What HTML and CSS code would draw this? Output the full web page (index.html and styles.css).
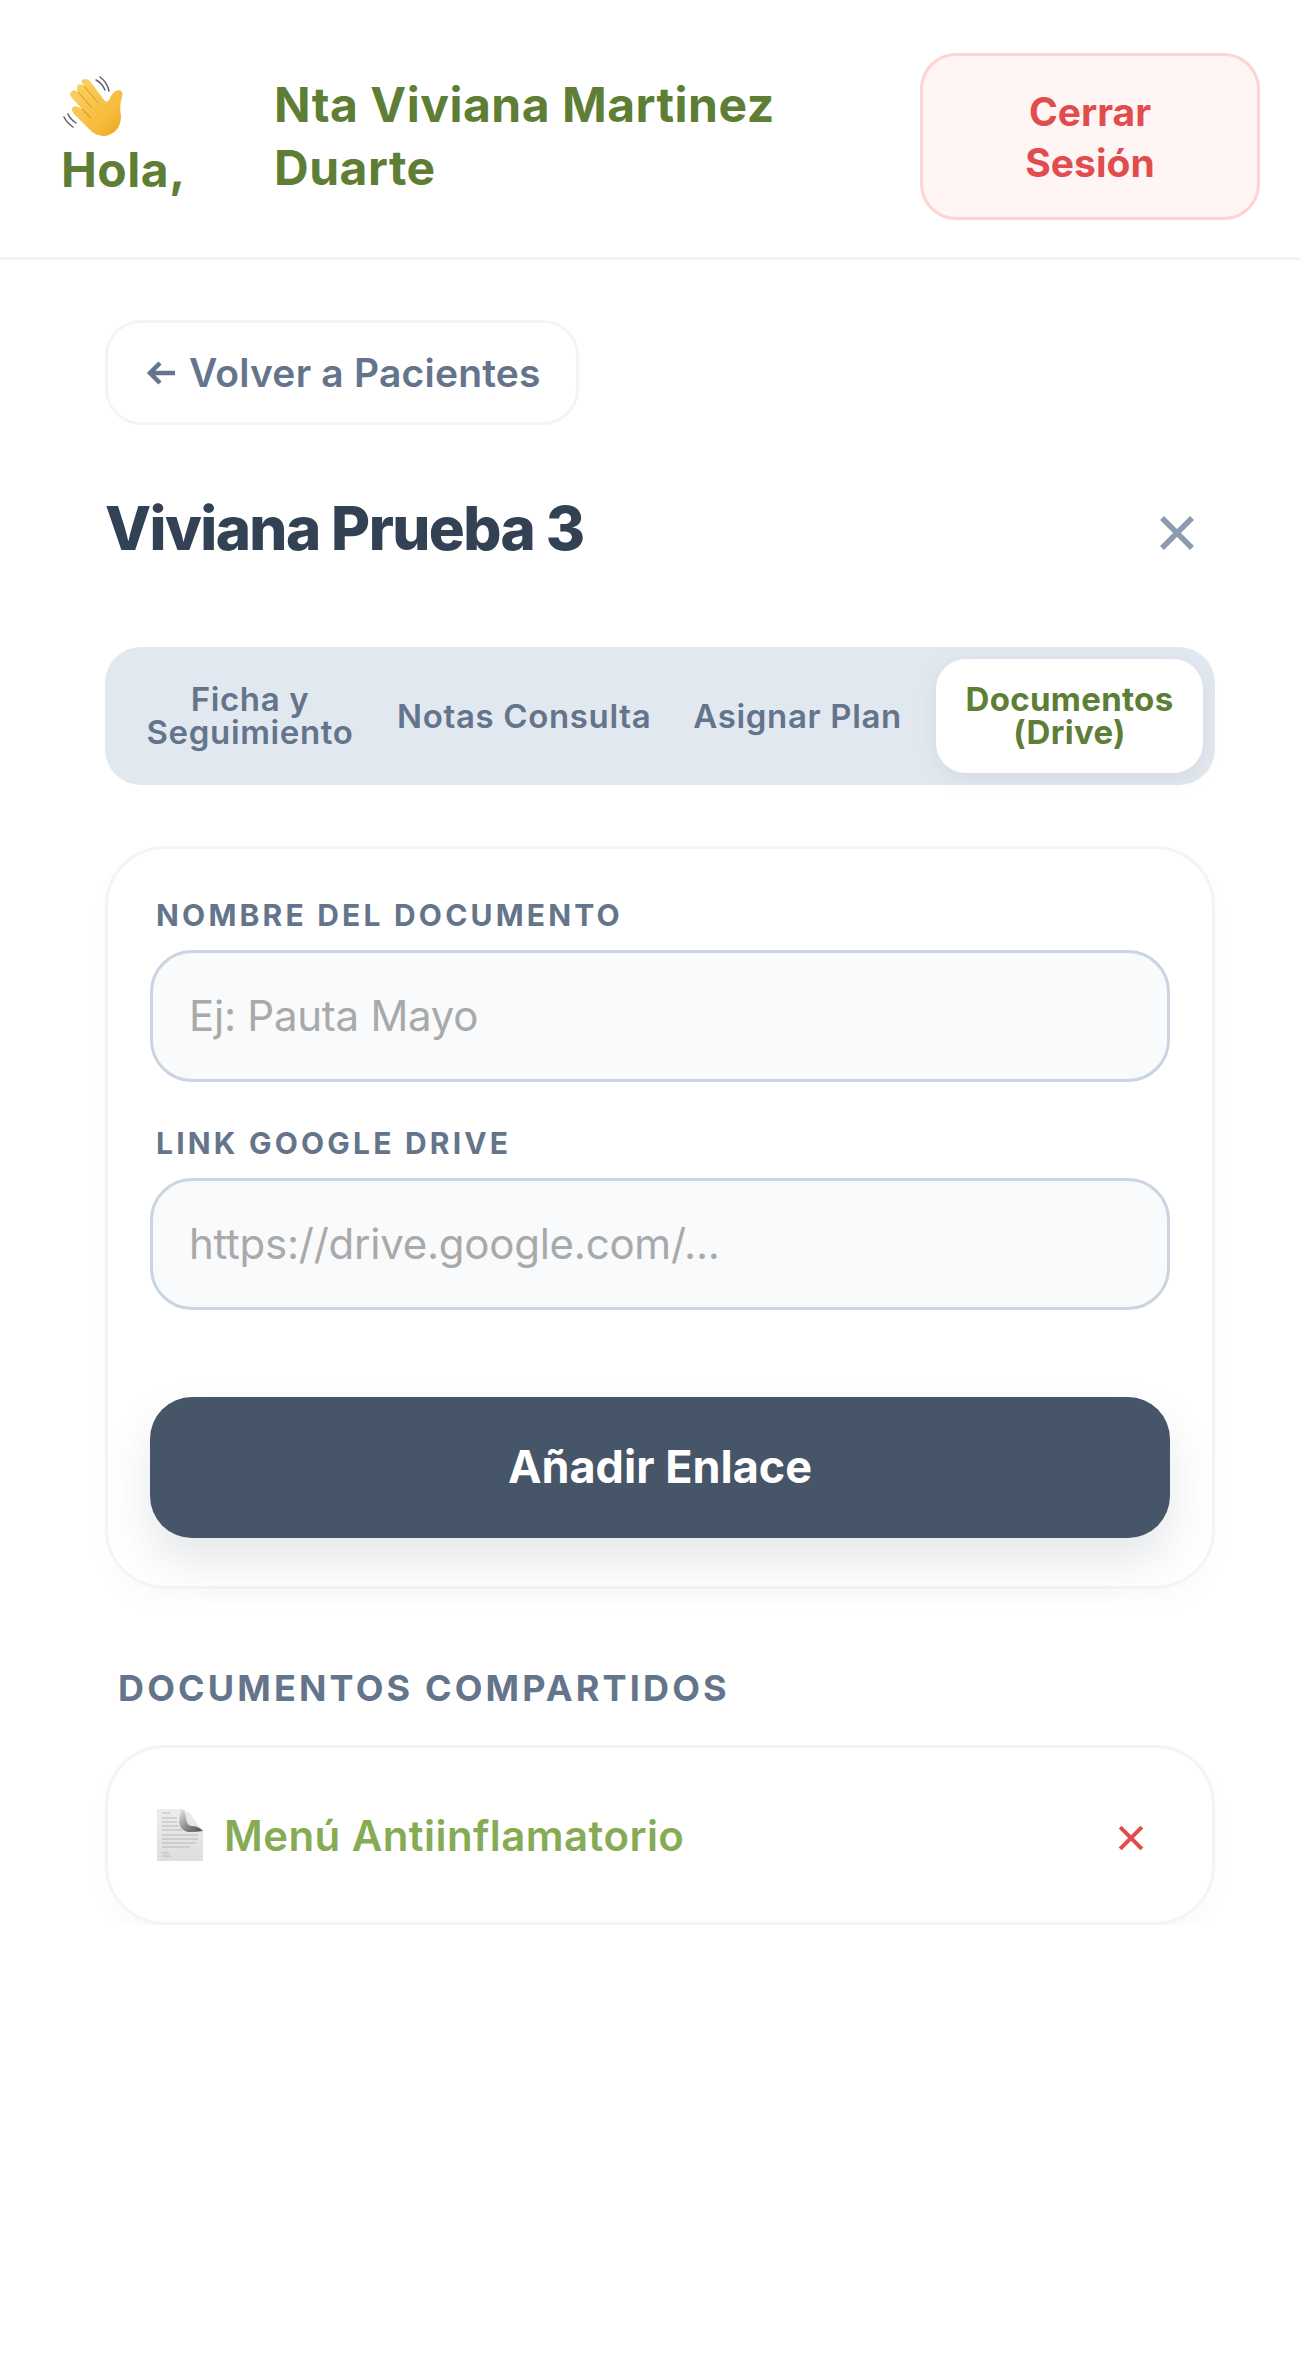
FILE: index.html
```html
<!DOCTYPE html>
<html lang="es">
    <head>
        <meta charset="utf-8">
        <title>Viviana Prueba 3</title>
        <link rel="stylesheet" href="styles.css">
    </head>
    <body>
        <header class="topbar">
            <div class="hello">
                <svg class="wave" viewBox="0 0 62 62" width="62" height="62">
                    <defs>
                        <linearGradient id="hand" x1="0" y1="0" x2="1" y2="1">
                            <stop offset="0" stop-color="#fbd469"/>
                            <stop offset="0.7" stop-color="#f6bb3a"/>
                            <stop offset="1" stop-color="#ee9f1c"/>
                        </linearGradient>
                    </defs>
                    <path d="M33 4q6 3 9 10M37 1q7 5 9 14M1 41q3 6 9 10M5 38q2 5 8 9" fill="none" stroke="#5f6168" stroke-width="1.5" stroke-linecap="round"/>
                    <path d="M18 5q4-4 9 0l14 19q3 3 5 0 4-10 10-10 5 1 3 7-3 9-1 19 0 14-12 19-10 3-18-4L12 39q-5-5-2-8 3-2 7 1l2 1L9 22q-4-5 0-7 3-2 6 1-2-4 0-7 3-2 6 1Z" fill="url(#hand)"/>
                    <path d="M15 16l14 16M21 10l14 17M19 33l9 9" fill="none" stroke="#e39d22" stroke-width="1.1"/>
                </svg>
                <span>Hola,</span>
            </div>
            <div class="name">Nta Viviana Martinez Duarte</div>
            <button class="logout">Cerrar Sesión</button>
        </header>

        <main class="page">
            <a class="back">
                <svg class="back-arrow" viewBox="0 0 30 26" width="30" height="26">
                    <path d="M29 13H4M14 3L4 13l10 10" fill="none" stroke="#64748b" stroke-width="4.5"/>
                </svg>
                Volver a Pacientes
            </a>

            <div class="title-row">
                <h1>Viviana Prueba 3</h1>
                <svg class="close" viewBox="0 0 36 36" width="36" height="36">
                    <path d="M3 3l30 30M33 3L3 33" fill="none" stroke="#8c9bb0" stroke-width="5.5"/>
                </svg>
            </div>

            <nav class="tabs">
                <div class="tab tab-first">Ficha y Seguimiento</div>
                <div class="tab">Notas Consulta</div>
                <div class="tab">Asignar Plan</div>
                <div class="tab tab-active">Documentos (Drive)</div>
            </nav>

            <section class="card form-card">
                <label class="field-label">Nombre del documento</label>
                <input class="field" type="text" placeholder="Ej: Pauta Mayo">
                <label class="field-label field-label-second">Link Google Drive</label>
                <input class="field" type="text" placeholder="https://drive.google.com/...">
                <button class="submit">Añadir Enlace</button>
            </section>

            <h2 class="section-title">Documentos compartidos</h2>

            <section class="card doc-row">
                <svg class="doc-icon" viewBox="0 0 48 54" width="48" height="54">
                    <defs>
                        <linearGradient id="sheet" x1="0" y1="0" x2="0" y2="1">
                            <stop offset="0" stop-color="#ededed"/>
                            <stop offset="1" stop-color="#dedede"/>
                        </linearGradient>
                        <linearGradient id="fold" x1="0" y1="0" x2="1" y2="1">
                            <stop offset="0" stop-color="#e8e8e8"/>
                            <stop offset="0.55" stop-color="#8a8a8a"/>
                            <stop offset="1" stop-color="#4a4a4a"/>
                        </linearGradient>
                    </defs>
                    <path d="M1 1h24q8 1 13 10 5 8 9 12v30H1Z" fill="url(#sheet)"/>
                    <path d="M25 1q4 1 5 9 1 8 6 8 6 0 11 5-6 1-15 1-8-2-9-10 1-8 2-13Z" fill="url(#fold)"/>
                    <path d="M6 5h8M6 10h15M6 14h15M6 18h17M6 22h20M6 27h36M6 31h36M6 35h34M6 39h28M6 45h7M6 48h9" stroke="#b8b8b8" stroke-width="1.1"/>
                </svg>
                <span class="doc-name">Menú Antiinflamatorio</span>
                <svg class="doc-remove" viewBox="0 0 24 24" width="26" height="26">
                    <path d="M2 2l20 20M22 2L2 22" fill="none" stroke="#e14d4d" stroke-width="3.8"/>
                </svg>
            </section>
        </main>
    </body>
</html>
```

FILE: styles.css
```css
* {
    margin: 0;
    padding: 0;
    box-sizing: border-box;
}
body {
    background: #fff;
    font-family: Inter, "Liberation Sans", sans-serif;
    color: #334155;
}
.topbar {
    height: 260px;
    padding: 53px 40px 37px 61px;
    display: flex;
    align-items: center;
    border-bottom: 3px solid #f1f5f9;
}
.hello {
    width: 213px;
    margin-top: 4px;
    flex-shrink: 0;
    font-size: 48px;
    font-weight: 700;
    line-height: 63px;
    letter-spacing: 0.5px;
    color: #5e7e36;
}
.hello span {
    display: block;
}
.wave {
    display: block;
    margin-left: 2px;
}
.name {
    width: 600px;
    margin-right: 46px;
    margin-bottom: 2px;
    font-size: 48px;
    font-weight: 700;
    line-height: 63px;
    letter-spacing: 0.5px;
    color: #5e7e36;
}
.logout {
    width: 340px;
    height: 167px;
    padding: 0 60px;
    flex-shrink: 0;
    font: 700 39px/51px Inter, sans-serif;
    color: #e14d4d;
    background: #fff5f5;
    border: 3px solid #fbd5d5;
    border-radius: 36px;
}
.page {
    padding: 60px 85px 0 105px;
}
.back {
    width: 474px;
    height: 105px;
    display: flex;
    align-items: center;
    gap: 13px;
    padding-left: 38px;
    font-size: 39px;
    font-weight: 600;
    letter-spacing: 0.2px;
    color: #64748b;
    background: #fff;
    border: 3px solid #f1f5f9;
    border-radius: 36px;
}
.title-row {
    height: 118px;
    margin-top: 44px;
    display: flex;
    align-items: center;
    justify-content: space-between;
    padding-right: 20px;
}
h1 {
    font-size: 60px;
    font-weight: 800;
    letter-spacing: -1.6px;
    color: #334155;
}
.close {
    margin-top: 10px;
}
.tabs {
    height: 138px;
    margin-top: 60px;
    padding: 12px;
    display: flex;
    align-items: stretch;
    background: #e2e8f0;
    border-radius: 36px;
}
.tab {
    display: flex;
    align-items: center;
    justify-content: center;
    text-align: center;
    font-size: 33px;
    font-weight: 600;
    line-height: 33px;
    letter-spacing: 0.65px;
    color: #64748b;
    padding: 0 21px;
}
.tab-first {
    width: 252px;
    margin-left: 7px;
    padding: 0;
}
.tab-active {
    width: 267px;
    margin-left: auto;
    letter-spacing: 0.3px;
    color: #5e7e36;
    font-weight: 700;
    background: #fff;
    border-radius: 30px;
    box-shadow: 0 6px 24px rgba(0, 0, 0, 0.06);
}
.card {
    background: #fff;
    border: 3px solid #f1f5f9;
    border-radius: 60px;
    box-shadow: 0 12px 30px rgba(0, 0, 0, 0.02);
}
.form-card {
    height: 743px;
    margin-top: 61px;
    padding: 48px 42px 0;
}
.field-label {
    display: block;
    margin-left: 6px;
    font-size: 30px;
    font-weight: 700;
    line-height: 36px;
    letter-spacing: 3.2px;
    text-transform: uppercase;
    color: #64748b;
}
.field-label-second {
    margin-top: 43px;
}
.field {
    display: block;
    width: 100%;
    height: 132px;
    margin-top: 17px;
    padding: 0 36px 2px;
    font: 400 42px Inter, sans-serif;
    letter-spacing: -0.25px;
    color: #334155;
    background: #f8fafc;
    border: 3px solid #cbd5e1;
    border-radius: 42px;
    outline: none;
}
.field::placeholder {
    color: #a9a9a9;
}
.submit {
    display: block;
    width: 100%;
    height: 141px;
    margin-top: 87px;
    padding-bottom: 2px;
    font: 700 45px Inter, sans-serif;
    color: #fff;
    background: #475569;
    border: 0;
    border-radius: 42px;
    box-shadow: 0 24px 45px rgba(71, 85, 105, 0.14);
}
.section-title {
    margin: 76px 0 0 13px;
    font-size: 36px;
    font-weight: 700;
    line-height: 46px;
    letter-spacing: 3.15px;
    text-transform: uppercase;
    color: #64748b;
}
.doc-row {
    height: 180px;
    margin-top: 34px;
    padding: 0 68px 0 48px;
    display: flex;
    align-items: center;
}
.doc-icon {
    margin-right: 20px;
}
.doc-name {
    flex: 1;
    font-size: 42px;
    font-weight: 600;
    letter-spacing: 0.43px;
    color: #87ab55;
}
.doc-remove {
    margin-top: 5px;
}
```
